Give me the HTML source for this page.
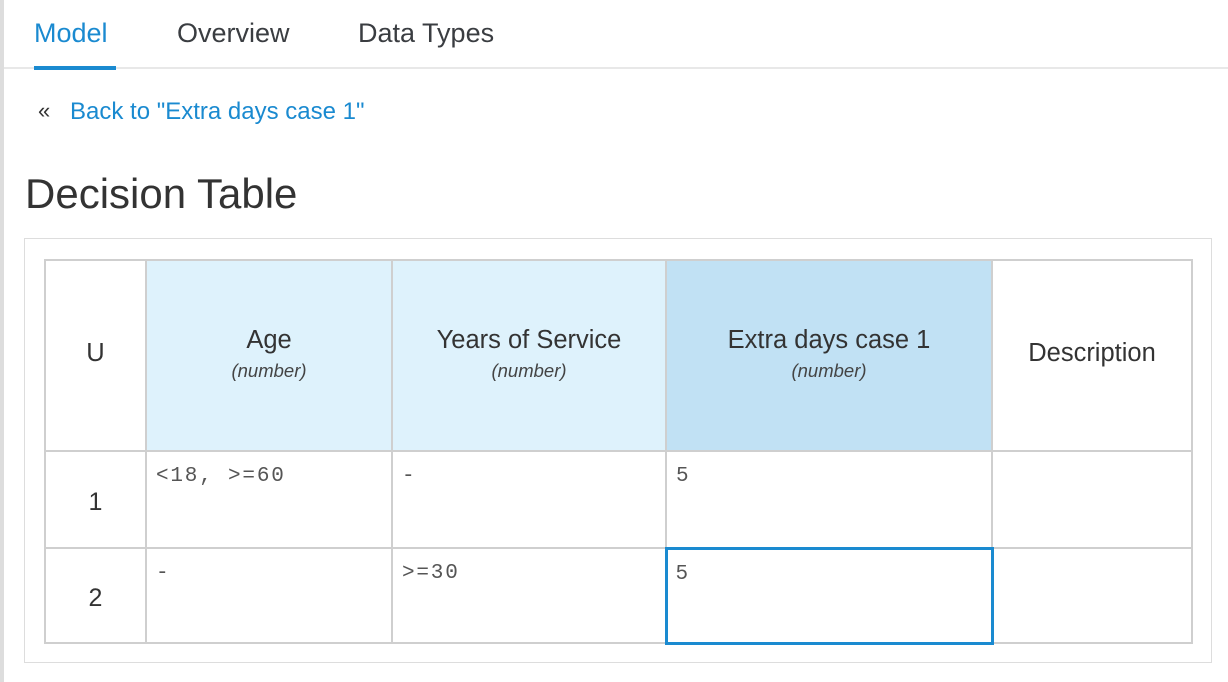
<!DOCTYPE html>
<html><head><style>
body{margin:0;width:1228px;height:682px;background:#fff;font-family:"Liberation Sans",sans-serif;position:relative;overflow:hidden}
.lb{position:absolute;left:0;top:0;width:4px;height:682px;background:#ddd}
.tab{position:absolute;top:18px;font-size:27px;color:#3a3d41}
.hl{position:absolute;left:4px;top:67px;width:1224px;height:2px;background:#e8e8e8}
.ul{position:absolute;left:34px;top:66px;width:82px;height:4px;background:#1a8ad0}
.box{position:absolute;left:24px;top:238px;width:1186px;height:423px;border:1px solid #ddd}
table{position:absolute;left:44px;top:259px;border-collapse:collapse;table-layout:fixed}
td{border:2px solid #cfcfcf;padding:0;vertical-align:top;color:#333}
.h{text-align:center;vertical-align:middle;font-size:25.5px;color:#333;padding-bottom:4px}
.h i{display:block;font-size:18.5px;margin-top:5px;color:#444}
.m{font-family:"Liberation Mono",monospace;font-size:21px;letter-spacing:1.8px;color:#555;padding:13px 0 0 9px}
.n{text-align:center;vertical-align:middle;font-size:25px;padding-top:6px}
</style></head><body>
<div class="lb"></div>
<div class="tab" style="left:34px;color:#1a8ad0">Model</div>
<div class="tab" style="left:177px">Overview</div>
<div class="tab" style="left:358px">Data Types</div>
<div class="hl"></div><div class="ul"></div>
<div style="position:absolute;left:38px;top:98px;font-size:22px;color:#333">«</div>
<div style="position:absolute;left:70px;top:98px;font-size:24px;color:#1a8ad0">Back to "Extra days case 1"</div>
<div style="position:absolute;left:25px;top:170px;font-size:42px;color:#333">Decision Table</div>
<div class="box"></div>
<table>
<colgroup><col style="width:101px"><col style="width:246px"><col style="width:274px"><col style="width:326px"><col style="width:200px"></colgroup>
<tr style="height:191px">
<td class="h">U</td>
<td class="h" style="background:#def2fc">Age<i>(number)</i></td>
<td class="h" style="background:#def2fc">Years of Service<i>(number)</i></td>
<td class="h" style="background:#c1e1f4">Extra days case 1<i>(number)</i></td>
<td class="h">Description</td></tr>
<tr style="height:97px"><td class="n">1</td><td class="m">&lt;18, &gt;=60</td><td class="m">-</td><td class="m">5</td><td></td></tr>
<tr style="height:95px"><td class="n">2</td><td class="m">-</td><td class="m">&gt;=30</td><td class="m" style="border:3px solid #1a8ad0;padding-left:8px">5</td><td></td></tr>
</table>
</body></html>
